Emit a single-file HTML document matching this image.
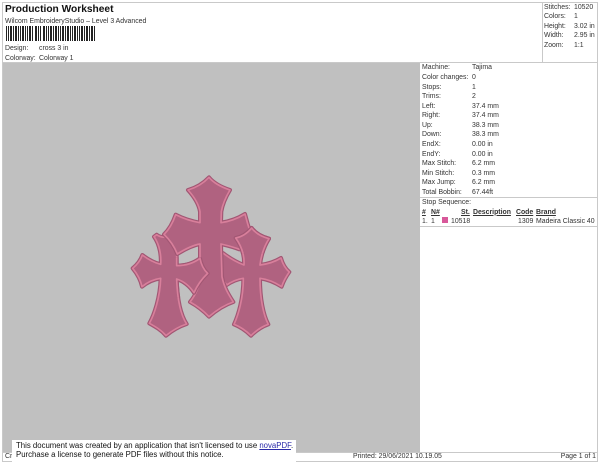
<!DOCTYPE html>
<html>
<head>
<meta charset="utf-8">
<style>
html,body{margin:0;padding:0;background:#fff}
body{width:600px;height:464px;position:relative;overflow:hidden;font-family:"Liberation Sans",sans-serif;font-size:6.9px;color:#333}
.a{position:absolute;white-space:nowrap;line-height:9px}
.l{position:absolute;background:#c9c9c9}
u{text-decoration:underline}
</style>
</head>
<body>
<div class="l" style="left:2px;top:2px;width:596px;height:1px"></div>
<div class="l" style="left:2px;top:2px;width:1px;height:460px"></div>
<div class="l" style="left:597px;top:2px;width:1px;height:460px"></div>
<div class="l" style="left:542px;top:2px;width:1px;height:61px"></div>
<div class="l" style="left:2px;top:62px;width:596px;height:1px"></div>
<div class="l" style="left:2px;top:461px;width:596px;height:1px"></div>
<div class="l" style="left:2px;top:452px;width:596px;height:1px"></div>
<div style="position:absolute;left:3px;top:63px;width:417px;height:389px;background:#c0c0c0"></div>

<div class="a" style="left:5px;top:2px;font-size:10.2px;line-height:15px;font-weight:bold;color:#111">Production Worksheet</div>
<div class="a" style="left:5px;top:16.5px">Wilcom EmbroideryStudio – Level 3 Advanced</div>

<svg style="position:absolute;left:6px;top:26px" width="90" height="15" viewBox="0 0 90 15">
<g fill="#222">
<rect x="0" width="1" height="15"/><rect x="2" width="1" height="15"/><rect x="4" width="2" height="15"/><rect x="7" width="1" height="15"/><rect x="9" width="2" height="15"/><rect x="12" width="1" height="15"/><rect x="14" width="1" height="15"/><rect x="16" width="2" height="15"/><rect x="19" width="1" height="15"/><rect x="21" width="1" height="15"/><rect x="23" width="2" height="15"/><rect x="26" width="1" height="15"/><rect x="29" width="2" height="15"/><rect x="32" width="1" height="15"/><rect x="34" width="1" height="15"/><rect x="37" width="2" height="15"/><rect x="40" width="1" height="15"/><rect x="42" width="1" height="15"/><rect x="44" width="2" height="15"/><rect x="47" width="1" height="15"/><rect x="49" width="2" height="15"/><rect x="52" width="1" height="15"/><rect x="54" width="1" height="15"/><rect x="56" width="2" height="15"/><rect x="59" width="1" height="15"/><rect x="61" width="2" height="15"/><rect x="64" width="1" height="15"/><rect x="66" width="1" height="15"/><rect x="68" width="2" height="15"/><rect x="71" width="1" height="15"/><rect x="73" width="1" height="15"/><rect x="75" width="2" height="15"/><rect x="78" width="1" height="15"/><rect x="80" width="2" height="15"/><rect x="83" width="1" height="15"/><rect x="85" width="2" height="15"/><rect x="88" width="1" height="15"/>
</g>
</svg>

<div class="a" style="left:5px;top:43.5px">Design:</div>
<div class="a" style="left:39px;top:43.5px">cross 3 in</div>
<div class="a" style="left:5px;top:53.5px">Colorway:</div>
<div class="a" style="left:39px;top:53.5px">Colorway 1</div>

<div class="a" style="left:544px;top:2.5px">Stitches:</div><div class="a" style="left:574px;top:2.5px">10520</div>
<div class="a" style="left:544px;top:12px">Colors:</div><div class="a" style="left:574px;top:12px">1</div>
<div class="a" style="left:544px;top:21.5px">Height:</div><div class="a" style="left:574px;top:21.5px">3.02 in</div>
<div class="a" style="left:544px;top:30.5px">Width:</div><div class="a" style="left:574px;top:30.5px">2.95 in</div>
<div class="a" style="left:544px;top:40.5px">Zoom:</div><div class="a" style="left:574px;top:40.5px">1:1</div>

<div class="a" style="left:422px;top:62.5px">Machine:</div><div class="a" style="left:472px;top:62.5px">Tajima</div>
<div class="a" style="left:422px;top:72.5px">Color changes:</div><div class="a" style="left:472px;top:72.5px">0</div>
<div class="a" style="left:422px;top:82.5px">Stops:</div><div class="a" style="left:472px;top:82.5px">1</div>
<div class="a" style="left:422px;top:91.5px">Trims:</div><div class="a" style="left:472px;top:91.5px">2</div>
<div class="a" style="left:422px;top:101.5px">Left:</div><div class="a" style="left:472px;top:101.5px">37.4 mm</div>
<div class="a" style="left:422px;top:110.5px">Right:</div><div class="a" style="left:472px;top:110.5px">37.4 mm</div>
<div class="a" style="left:422px;top:120.5px">Up:</div><div class="a" style="left:472px;top:120.5px">38.3 mm</div>
<div class="a" style="left:422px;top:130px">Down:</div><div class="a" style="left:472px;top:130px">38.3 mm</div>
<div class="a" style="left:422px;top:139.5px">EndX:</div><div class="a" style="left:472px;top:139.5px">0.00 in</div>
<div class="a" style="left:422px;top:149.5px">EndY:</div><div class="a" style="left:472px;top:149.5px">0.00 in</div>
<div class="a" style="left:422px;top:158.5px">Max Stitch:</div><div class="a" style="left:472px;top:158.5px">6.2 mm</div>
<div class="a" style="left:422px;top:168.5px">Min Stitch:</div><div class="a" style="left:472px;top:168.5px">0.3 mm</div>
<div class="a" style="left:422px;top:178px">Max Jump:</div><div class="a" style="left:472px;top:178px">6.2 mm</div>
<div class="a" style="left:422px;top:187.5px">Total Bobbin:</div><div class="a" style="left:472px;top:187.5px">67.44ft</div>
<div class="l" style="left:420px;top:197px;width:177px;height:1px"></div>
<div class="a" style="left:422px;top:197.5px">Stop Sequence:</div>

<div class="a" style="left:422px;top:207.5px;font-weight:bold"><u>#</u></div>
<div class="a" style="left:431px;top:207.5px;font-weight:bold"><u>N#</u></div>
<div class="a" style="left:461px;top:207.5px;font-weight:bold"><u>St.</u></div>
<div class="a" style="left:473px;top:207.5px;font-weight:bold"><u>Description</u></div>
<div class="a" style="left:516px;top:207.5px;font-weight:bold"><u>Code</u></div>
<div class="a" style="left:536px;top:207.5px;font-weight:bold"><u>Brand</u></div>
<div class="a" style="left:422px;top:216.5px">1.</div>
<div class="a" style="left:431px;top:216.5px">1</div>
<div style="position:absolute;left:442px;top:217px;width:6px;height:6px;background:#d8589a"></div>
<div class="a" style="left:451px;top:216.5px">10518</div>
<div class="a" style="left:518px;top:216.5px">1309</div>
<div class="a" style="left:536px;top:216.5px">Madeira Classic 40</div>
<div class="l" style="left:420px;top:226px;width:177px;height:1px"></div>

<svg style="position:absolute;left:120px;top:170px" width="180" height="175" viewBox="0 0 540 525">
<defs>
<path id="c" d="M267 22 C280 38 300 50 330 60 C318 80 308 100 304 125 L303 158 C325 155 352 146 375 132 C380 152 386 172 392 190 C378 204 366 222 358 238 C338 230 320 226 303 222 L306 320 C312 352 326 374 340 396 C316 404 290 420 267 440 C250 422 232 408 210 396 C226 376 238 350 240 322 L240 222 C218 226 194 238 172 252 C164 232 150 210 132 193 C148 178 160 154 167 134 C190 146 216 154 240 158 L240 125 C236 100 222 80 204 60 C232 52 252 38 267 22 Z"/>
<path id="l" d="M110 194 C118 200 130 204 146 200 L170 240 L170 287 C195 287 220 280 240 265 C243 282 250 298 263 310 C246 326 232 345 222 368 C210 350 192 334 170 327 C172 385 182 435 200 462 C176 470 156 482 138 497 C124 480 106 470 88 460 C102 435 120 385 122 325 C100 328 82 337 66 350 C62 330 52 312 38 295 C50 285 62 270 67 255 C84 268 102 278 122 283 C124 260 120 225 102 200 Z"/>
<path id="r" d="M395 174 C405 188 424 200 447 206 C435 225 424 250 420 285 C445 282 465 275 483 264 C488 282 496 296 508 306 C498 320 490 335 485 350 C466 338 445 328 420 325 C420 385 430 435 445 463 C425 470 408 482 393 497 C378 482 360 470 342 463 C355 435 370 385 370 325 C350 328 335 335 320 345 L290 300 L295 245 L310 250 C330 265 350 277 372 285 C374 250 362 225 347 204 C368 200 382 190 395 174 Z"/>
<clipPath id="cl"><rect x="150" y="262" width="130" height="120"/></clipPath>
<clipPath id="cr"><rect x="338" y="160" width="120" height="90"/></clipPath>
</defs>
<g stroke-linejoin="round">
<use href="#r" fill="#b06280" stroke="#a15673" stroke-width="12"/><use href="#r" fill="#b06280" stroke="#d87f9b" stroke-width="5"/>
<use href="#l" fill="#b06280" stroke="#a15673" stroke-width="12"/><use href="#l" fill="#b06280" stroke="#d87f9b" stroke-width="5"/>
<use href="#c" fill="#b06280" stroke="#a15673" stroke-width="12"/><use href="#c" fill="#b06280" stroke="#d87f9b" stroke-width="5"/>
<g clip-path="url(#cr)"><use href="#r" fill="#b06280" stroke="#a15673" stroke-width="12"/><use href="#r" fill="#b06280" stroke="#d87f9b" stroke-width="5"/></g>
<g clip-path="url(#cl)"><use href="#l" fill="#b06280" stroke="#a15673" stroke-width="12"/><use href="#l" fill="#b06280" stroke="#d87f9b" stroke-width="5"/></g>
</g>
</svg>

<div class="a" style="left:5px;top:451.5px">Cr</div>
<div style="position:absolute;left:12px;top:440px;width:284px;height:24px;background:#fff"></div>
<div class="a" style="left:16px;top:440.7px;font-size:7.8px;line-height:10px;color:#111">This document was created by an application that isn't licensed to use <u style="color:#2a2aa8">novaPDF</u>.</div>
<div class="a" style="left:16px;top:450.3px;font-size:7.8px;line-height:10px;color:#111">Purchase a license to generate PDF files without this notice.</div>
<div class="a" style="left:353px;top:451.5px">Printed: 29/06/2021 10.19.05</div>
<div class="a" style="right:4px;top:451.5px">Page 1 of 1</div>
</body>
</html>
